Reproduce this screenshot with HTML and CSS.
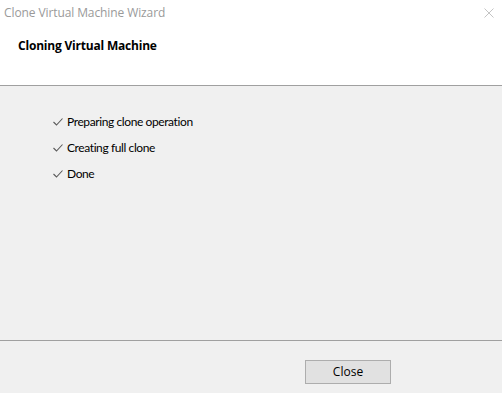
FILE: index.html
```html
<!DOCTYPE html>
<html>
<head>
<meta charset="utf-8">
<link rel="stylesheet" href="styles.css">
</head>
<body>
<div class="window">
  <div class="titlebar">
    <span class="title">Clone Virtual Machine Wizard</span>
    <svg class="close" width="10" height="10" viewBox="0 0 10 10"><path d="M0.5 0.5 L9.5 9.5 M9.5 0.5 L0.5 9.5" stroke="#c4c4c4" stroke-width="1" fill="none"/></svg>
  </div>
  <div class="header">
    <h1 class="heading">Cloning Virtual Machine</h1>
  </div>
  <div class="content">
    <ul class="steps">
      <li class="step"><svg class="check" width="10" height="8" viewBox="0 0 10 8"><path d="M0.5 4 L3.5 7 L9.5 0.5" stroke="#5a5a5a" stroke-width="1.1" fill="none"/></svg><span>Preparing clone operation</span></li>
      <li class="step"><svg class="check" width="10" height="8" viewBox="0 0 10 8"><path d="M0.5 4 L3.5 7 L9.5 0.5" stroke="#5a5a5a" stroke-width="1.1" fill="none"/></svg><span>Creating full clone</span></li>
      <li class="step"><svg class="check" width="10" height="8" viewBox="0 0 10 8"><path d="M0.5 4 L3.5 7 L9.5 0.5" stroke="#5a5a5a" stroke-width="1.1" fill="none"/></svg><span>Done</span></li>
    </ul>
  </div>
  <div class="footer">
    <button class="btn">Close</button>
  </div>
</div>
</body>
</html>
```
FILE: styles.css
```css
html, body {
  margin: 0;
  padding: 0;
}
body {
  font-family: "Open Sans", "Noto Sans", sans-serif;
  font-size: 12px;
  color: #000;
  background: #f0f0f0;
}
.window {
  width: 502px;
  height: 393px;
  display: flex;
  flex-direction: column;
  overflow: hidden;
}
.titlebar {
  height: 26px;
  background: #fff;
  display: flex;
  align-items: center;
  justify-content: space-between;
  padding: 0 8px 0 4px;
}
.title {
  color: #9a9a9a;
  font-size: 12px;
  letter-spacing: -0.1px;
  position: relative;
  top: -1px;
}
.close {
  position: relative;
  top: 0;
}
.header {
  height: 59px;
  background: #fff;
  border-bottom: 1px solid #a0a0a0;
}
.heading {
  margin: 0;
  padding: 12px 0 0 18px;
  font-size: 12px;
  font-weight: bold;
  line-height: 16px;
  letter-spacing: -0.2px;
}
.content {
  flex: 1;
  background: #f0f0f0;
  border-bottom: 1px solid #a0a0a0;
}
.steps {
  list-style: none;
  margin: 0;
  padding: 22px 0 0 53px;
  font-family: "Lato", "Open Sans", sans-serif;
  font-size: 12px;
  letter-spacing: -0.4px;
}
.step {
  display: flex;
  align-items: center;
  height: 26px;
  gap: 4px;
}
.check {
  position: relative;
  top: 1px;
}
.footer {
  height: 52px;
  background: #f0f0f0;
  display: flex;
  align-items: flex-start;
  padding: 19px 0 0 305px;
  box-sizing: border-box;
}
.btn {
  width: 86px;
  height: 24px;
  background: #e1e1e1;
  border: 1px solid #adadad;
  font-family: inherit;
  font-size: 12px;
  color: #000;
  padding: 0 0 2px 0;
  margin: 0;
}
```
